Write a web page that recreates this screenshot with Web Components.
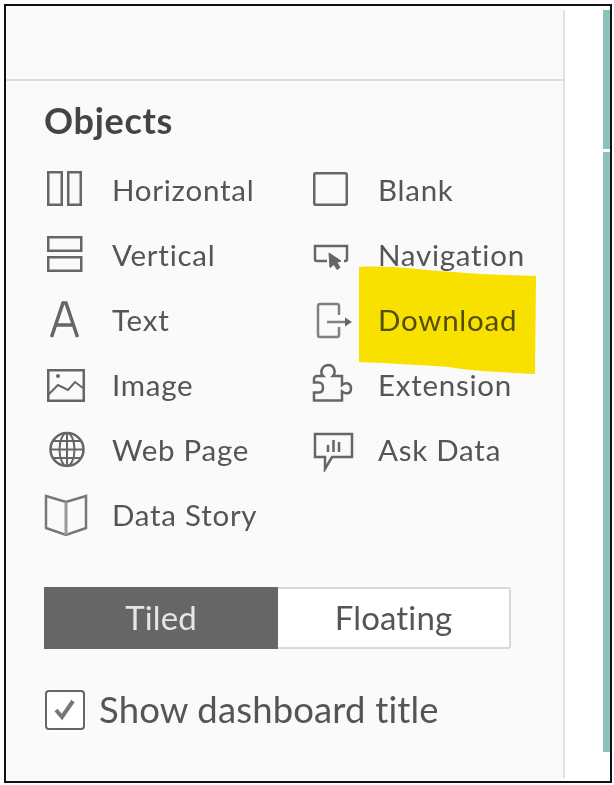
<!DOCTYPE html>
<html>
<head>
<meta charset="utf-8">
<title>Objects</title>
<style>
  html, body { margin: 0; padding: 0; background: #fff; }
  body { width: 614px; height: 785px; overflow: hidden; font-family: Lato, "Liberation Sans", sans-serif; }
</style>
</head>
<body>
<dash-frame>
  <objects-panel>
    <object-item icon="horizontal">Horizontal</object-item>
    <object-item icon="blank">Blank</object-item>
    <object-item icon="vertical">Vertical</object-item>
    <object-item icon="navigation">Navigation</object-item>
    <object-item icon="text">Text</object-item>
    <object-item icon="download">Download</object-item>
    <object-item icon="image">Image</object-item>
    <object-item icon="extension">Extension</object-item>
    <object-item icon="web">Web Page</object-item>
    <object-item icon="ask">Ask Data</object-item>
    <object-item icon="story">Data Story</object-item>
  </objects-panel>
</dash-frame>

<script>
const frameTemplate = document.createElement('template');
frameTemplate.innerHTML = `
<style>
  :host{
    display: flex;
    box-sizing: border-box;
    width: 608px;
    height: 779px;
    margin: 4px 0 0 4px;
    border: 2px solid #111;
    background: #fff;
    filter: blur(0.7px);
  }
  .side{
    flex: none;
    width: 557px;
    background: #fafafa;
    box-sizing: border-box;
  }
  .rule{
    flex: none;
    width: 2px;
    margin: 4px 0 3px;
    background: #e0e0e0;
  }
  .canvas{
    flex: auto;
    display: flex;
    flex-direction: column;
    align-items: flex-end;
    padding: 4px 0 29px;
  }
  .stripe{
    width: 7px;
    background: #8cc2bd;
  }
  .stripe.top{ height: 139px; }
  .stripe.bottom{ flex: auto; margin-top: 3px; }
</style>
<div class="side"><slot></slot></div>
<div class="rule"></div>
<div class="canvas">
  <div class="stripe top"></div>
  <div class="stripe bottom"></div>
</div>
`;

class DashFrame extends HTMLElement {
  constructor() {
    super();
    this.attachShadow({ mode: 'open' }).appendChild(frameTemplate.content.cloneNode(true));
  }
}
customElements.define('dash-frame', DashFrame);

const panelTemplate = document.createElement('template');
panelTemplate.innerHTML = `
<style>
  :host{
    display: block;
    position: relative;
    height: 100%;
    color: #555;
  }
  .head{
    height: 73px;
    border-bottom: 2px solid #dcdcdc;
  }
  .body{
    padding: 19px 0 0 38px;
  }
  h2{
    margin: 0;
    font: 700 36px/40px Lato, "Liberation Sans", sans-serif;
    color: #444;
    letter-spacing: 0.7px;
  }
  .grid{
    display: grid;
    grid-template-columns: 266px 200px;
    grid-auto-rows: 65px;
    margin-top: 17px;
  }
  layout-toggle{ margin-top: 40px; }
  check-option{ margin: 39px 0 0 1px; }
  .mark{
    position: absolute;
    left: 353px;
    top: 259px;
    width: 178px;
    height: 110px;
    mix-blend-mode: multiply;
  }
</style>
<div class="head"></div>
<div class="body">
  <h2>Objects</h2>
  <div class="grid"><slot></slot></div>
  <layout-toggle></layout-toggle>
  <check-option>Show dashboard title</check-option>
</div>
<svg class="mark" viewBox="0 0 178 110"><path fill="#fde600" d="M0 2 C30 0 60 5 95 7 C125 10 150 10 177 11 L176 109 C140 107 110 106 90 102 C60 100 30 98 0 97Z"/></svg>
`;

class ObjectsPanel extends HTMLElement {
  constructor() {
    super();
    this.attachShadow({ mode: 'open' }).appendChild(panelTemplate.content.cloneNode(true));
  }
}
customElements.define('objects-panel', ObjectsPanel);

const ICONS = {
  horizontal: '<rect x="4.250" y="4.250" width="13.500" height="32.500"/><rect x="24.250" y="4.250" width="12.500" height="32.500"/>',
  blank: '<rect x="4.250" y="5.250" width="32.500" height="31.500" rx="1.500"/>',
  vertical: '<rect x="4.250" y="4.250" width="33" height="13.500"/><rect x="4.250" y="24.250" width="33" height="13.500"/>',
  navigation: '<path d="M17 28H7a2 2 0 0 1-2-2V13h32v13a2 2 0 0 1-2 2h-1"/><path fill="#666" stroke-width="1" d="M19 20l12 8-4 1.500 3 5-3 2-3-5-4 3z"/>',
  text: '<path stroke-width="3.500" d="M7.500 39L19 5h3L33.500 39M11.500 27h18"/>',
  download: '<path stroke="#808080" d="M29 17V8a2 2 0 0 0-2-2H10a2 2 0 0 0-2 2V37a2 2 0 0 0 2 2H27a2 2 0 0 0 2-2V29"/><path stroke="#808080" d="M17 24h19"/><path fill="#666" stroke="none" d="M35 19.500l7 4.500-7 4.500z"/>',
  image: '<rect x="4.250" y="7.250" width="35.500" height="30.500"/><circle cx="14" cy="13" r="2" fill="#666" stroke="none"/><path stroke-width="2" d="M4 32l10-10 10 5 7-8 8 6"/>',
  extension: '<path d="M4 16a3 3 0 0 1 3-3h6c-3-3-2-10 5-11c7 0 8 8 5 11h9v9c4-3 9-2 9 3.500s-5 6-9 3v9H4v-8h5c3 0 4-2 4-5s-2-5-4-5H4z"/>',
  web: '<circle cx="23" cy="21.500" r="16.500"/><ellipse stroke-width="2" cx="23" cy="21.500" rx="7.500" ry="16.500"/><path stroke-width="2" d="M23 5v33M6.500 21.500h33M9 13h28M9 30h28"/>',
  ask: '<path d="M5 6h37v23H22l-7 12v-12H5z"/><path d="M18 24v-7M23.500 24V12M29 24V14"/>',
  story: '<path stroke="#777" d="M2 3l20 6 20-6v32l-20 7-20-7z"/><path stroke="#999" stroke-width="3" d="M22 9v33"/>'
};

const itemTemplate = document.createElement('template');
itemTemplate.innerHTML = `
<style>
  :host{
    display: flex;
    align-items: center;
    height: 65px;
    font: 400 29.500px/40px Lato, "Liberation Sans", sans-serif;
    letter-spacing: 0.75px;
    color: #555;
  }
  svg{
    flex: none;
    width: 44px;
    height: 44px;
    margin-right: 24px;
    fill: none;
    stroke: #666;
    stroke-width: 2.500;
  }
</style>
<svg viewBox="0 0 44 44"></svg>
<slot></slot>
`;

class ObjectItem extends HTMLElement {
  constructor() {
    super();
    this.attachShadow({ mode: 'open' }).appendChild(itemTemplate.content.cloneNode(true));
    this.shadowRoot.querySelector('svg').innerHTML = ICONS[this.getAttribute('icon')] || '';
  }
}
customElements.define('object-item', ObjectItem);

const toggleTemplate = document.createElement('template');
toggleTemplate.innerHTML = `
<style>
  :host{
    display: flex;
    width: 467px;
    height: 62px;
    font: 400 33px/1 Lato, "Liberation Sans", sans-serif;
    letter-spacing: 0.15px;
  }
  div{
    display: flex;
    align-items: center;
    justify-content: center;
    box-sizing: border-box;
    padding-bottom: 2px;
  }
  .on{
    width: 234px;
    background: #666;
    color: #e6e6e6;
  }
  .off{
    flex: auto;
    background: #fff;
    color: #555;
    border: 2px solid #d9d9d9;
    border-left: 0;
    border-radius: 0 3px 3px 0;
  }
</style>
<div class="on">Tiled</div>
<div class="off">Floating</div>
`;

class LayoutToggle extends HTMLElement {
  constructor() {
    super();
    this.attachShadow({ mode: 'open' }).appendChild(toggleTemplate.content.cloneNode(true));
  }
}
customElements.define('layout-toggle', LayoutToggle);

const checkTemplate = document.createElement('template');
checkTemplate.innerHTML = `
<style>
  :host{
    display: flex;
    align-items: center;
    gap: 14px;
    font: 400 36.500px/40px Lato, "Liberation Sans", sans-serif;
    letter-spacing: 0.15px;
    color: #555;
  }
  .box{
    flex: none;
    box-sizing: border-box;
    width: 40px;
    height: 40px;
    margin-top: 2px;
    border: 2.500px solid #666;
    border-radius: 4px;
    background: #fff;
  }
  svg{ display: block; width: 35px; height: 35px; }
</style>
<div class="box">
  <svg viewBox="0 0 35 35"><path fill="none" stroke="#777" stroke-width="4" d="M9 18l6 7 11-16"/></svg>
</div>
<slot></slot>
`;

class CheckOption extends HTMLElement {
  constructor() {
    super();
    this.attachShadow({ mode: 'open' }).appendChild(checkTemplate.content.cloneNode(true));
  }
}
customElements.define('check-option', CheckOption);
</script>
</body>
</html>
